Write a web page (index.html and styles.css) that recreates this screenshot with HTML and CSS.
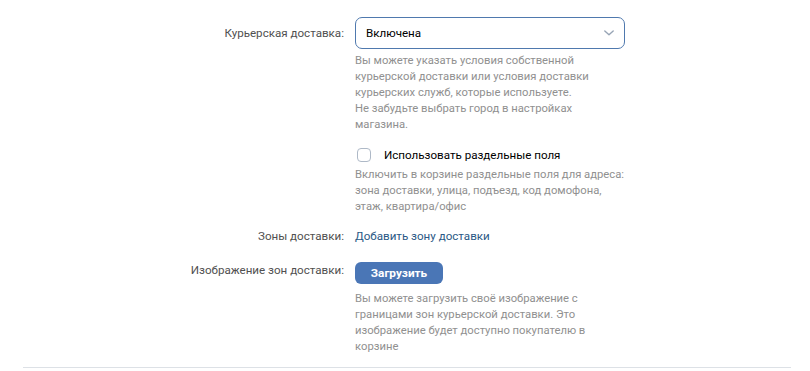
FILE: index.html
```html
<!DOCTYPE html>
<html lang="ru">
  <head>
    <meta charset="UTF-8" />
    <title>Доставка</title>
    <link rel="stylesheet" href="styles.css">
  </head>
  <body>
    <main class="settings">
      <div class="row row-select">
        <div class="label">Курьерская доставка:</div>
        <div class="control">
          <div class="select">
            <span>Включена</span>
            <svg class="chevron" width="12" height="8" viewBox="0 0 12 8">
              <path d="M1.8 2 L6 5.8 L10.2 2" fill="none" stroke="#97a4b5" stroke-width="1.4" stroke-linecap="round" stroke-linejoin="round" />
            </svg>
          </div>
          <p class="hint">Вы можете указать условия собственной курьерской доставки или условия доставки курьерских служб, которые используете.<br>Не забудьте выбрать город в настройках магазина.</p>
        </div>
      </div>

      <div class="row row-check">
        <div class="label"></div>
        <div class="control">
          <label class="checkbox">
            <span class="box"></span>
            <span>Использовать раздельные поля</span>
          </label>
          <p class="hint">Включить в корзине раздельные поля для адреса: зона доставки, улица, подъезд, код домофона, этаж, квартира/офис</p>
        </div>
      </div>

      <div class="row row-zones">
        <div class="label">Зоны доставки:</div>
        <div class="control">
          <a class="link" href="#">Добавить зону доставки</a>
        </div>
      </div>

      <div class="row row-upload">
        <div class="label">Изображение зон доставки:</div>
        <div class="control">
          <button class="button" type="button">Загрузить</button>
          <p class="hint">Вы можете загрузить своё изображение с границами зон курьерской доставки. Это изображение будет доступно покупателю в корзине</p>
        </div>
      </div>
    </main>
    <hr class="divider">
  </body>
</html>
```

FILE: styles.css
```css
body {
  margin: 0;
  background: #fff;
  font-family: Roboto, "Liberation Sans", Arial, sans-serif;
  font-size: 11.6px;
  color: #000;
}

.settings {
  padding-top: 17px;
}

.row {
  display: grid;
  grid-template-columns: 344px 270px;
  column-gap: 11px;
}

.label {
  text-align: right;
  color: #505050;
  line-height: 16px;
}

.control {
  display: flex;
  flex-direction: column;
  align-items: flex-start;
}

.hint {
  margin: 0;
  font-size: 11.25px;
  line-height: 16px;
  color: #909090;
}

/* select */
.row-select .label {
  padding-top: 8px;
}

.select {
  box-sizing: border-box;
  width: 270px;
  height: 32px;
  border: 1px solid #4f79ae;
  border-radius: 7px;
  padding: 0 9px 0 10px;
  display: flex;
  align-items: center;
  justify-content: space-between;
}

.row-select .hint {
  margin-top: 4px;
}

/* checkbox */
.row-check {
  margin-top: 12px;
}

.checkbox {
  display: flex;
  align-items: center;
  gap: 13px;
  height: 20px;
  margin-left: 2px;
}

.box {
  box-sizing: border-box;
  width: 14px;
  height: 14px;
  border: 1px solid #aeb9c7;
  border-radius: 4px;
}

.row-check .hint {
  margin-top: 2px;
}

/* zones */
.row-zones {
  margin-top: 13px;
  line-height: 16px;
}

.link {
  color: #2a5885;
  text-decoration: none;
}

/* upload */
.row-upload {
  margin-top: 18px;
}

.button {
  font-family: inherit;
  font-size: 11.8px;
  font-weight: 700;
  color: #fff;
  background: #4a76b6;
  border: 0;
  border-radius: 6px;
  height: 22px;
  width: 88px;
  padding: 0;
}

.row-upload .hint {
  margin-top: 7px;
}

.divider {
  margin: 12px 19px 0 23px;
  border: 0;
  border-top: 1px solid #dde1e6;
}
```
